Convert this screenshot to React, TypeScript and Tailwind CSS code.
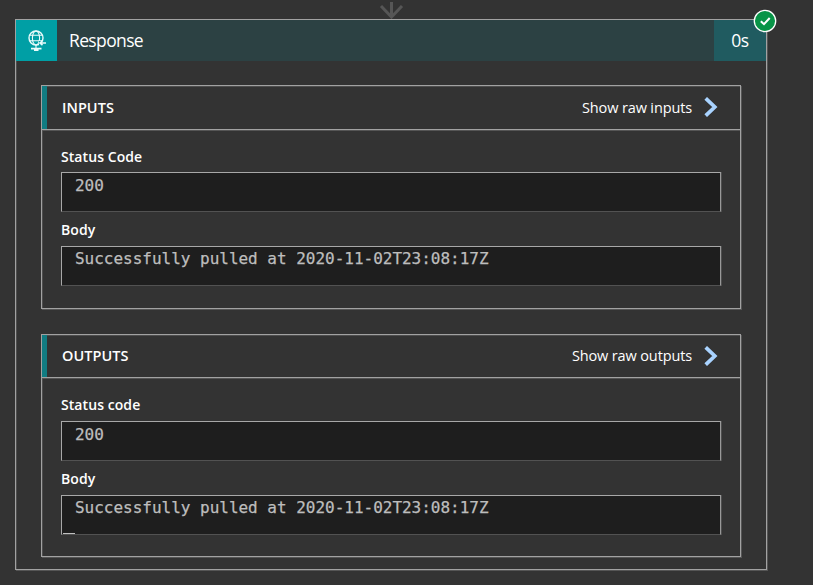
import React from 'react';

const lines = 'border border-[#a2a2a2] shadow-[inset_1px_1px_0_#4e4e4e,1px_1px_0_#555555]';

function GlobeIcon() {
  return (
    <svg width="20" height="22" viewBox="0 0 20 22" fill="none" stroke="#e9fbfb">
      <circle cx="9" cy="8" r="7" strokeWidth="1.4" />
      <ellipse cx="9" cy="8" rx="3.6" ry="7" strokeWidth="1.1" />
      <path d="M2.5 5.3h13M2.5 10.7h13M9 15v3" strokeWidth="1.1" />
      <path d="M4 18.6h10.5M7 20h4.5" strokeWidth="1.9" />
      <path d="M12 13h7" stroke="#009fa5" strokeWidth="4" />
      <path d="M19 13h-5.5M15.5 10.8l-2.5 2.2 2.5 2.2" strokeWidth="1.6" />
    </svg>
  );
}

interface FieldProps {
  label: string;
  value: string;
  gap: string;
  labelLeading: string;
  leading: string;
  cursor?: boolean;
}

function Field({ label, value, gap, labelLeading, leading, cursor = false }: FieldProps) {
  return (
    <div className={gap}>
      <div className={`h-5 text-[14px] font-semibold tracking-[0.07px] text-white ${labelLeading}`}>{label}</div>
      <div className={`relative mt-[6px] h-10 border border-[#a8a8a8] border-b-[#525252] border-r-[#999] bg-[#1e1e1e] pl-[13px] font-['DejaVu_Sans_Mono',monospace] text-[16px] tracking-[-0.015px] text-[#bdbdbd] shadow-[1px_0_0_#4e4e4e] [-webkit-text-stroke:0.25px_#bdbdbd] ${leading}`}>
        {value}
        {cursor && <span className="absolute bottom-0 left-[1px] h-px w-3 bg-[#c0c0c0]" />}
      </div>
    </div>
  );
}

interface PanelProps {
  title: string;
  action: string;
  statusLabel: string;
  panelClass: string;
  headerClass: string;
  firstGap: string;
  firstLeading: string;
  cursor?: boolean;
}

function Panel({ title, action, statusLabel, panelClass, headerClass, firstGap, firstLeading, cursor }: PanelProps) {
  return (
    <section className={`${lines} ${panelClass}`}>
      <header className={`flex items-center border-b border-[#a2a2a2] shadow-[0_1px_0_#555555] ${headerClass}`}>
        <span className="h-full w-[5px] bg-[#117c82]" />
        <h2 className="ml-[15px] text-[14.5px] font-semibold tracking-[0.05px] text-white">{title}</h2>
        <span className="ml-auto text-[14.5px] tracking-[-0.13px] text-white">{action}</span>
        <svg className="-mt-px ml-[12px] mr-[22px]" width="14" height="20" viewBox="0 0 14 20" fill="none">
          <path d="M1.7 1.3L10.8 10L1.7 18.7" stroke="#a9d3ff" strokeWidth="3.7" />
        </svg>
      </header>
      <div className="px-[19px]">
        <Field label={statusLabel} value="200" gap={firstGap} labelLeading={firstLeading} leading="leading-[25px]" />
        <Field label="Body" value="Successfully pulled at 2020-11-02T23:08:17Z" gap="pt-[8px]" labelLeading="leading-5" leading="leading-[23px]" cursor={cursor} />
      </div>
    </section>
  );
}

export default function App() {
  return (
    <main className="h-[585px] w-[813px] overflow-hidden bg-[#333333] pl-[15px] font-['Open_Sans','Noto_Sans',sans-serif]">
      <div className="flex h-[19px] w-[753px] justify-center">
        <svg width="26" height="19" viewBox="0 0 26 19" fill="none" stroke="#565656" strokeWidth="3">
          <path d="M12.5 2v15M2 6l10.5 11L23 6" />
        </svg>
      </div>
      <article className={`relative h-[551px] w-[752px] ${lines}`}>
        <header className="flex h-[41px] items-center bg-[#2c4143] text-[17.5px] text-white">
          <div className="flex h-full w-[41px] items-center justify-center bg-[#009fa5] pl-px">
            <GlobeIcon />
          </div>
          <h1 className="ml-3 pb-px tracking-[-0.63px]">Response</h1>
          <div className="ml-auto flex h-full w-[52px] items-center justify-center bg-[#205b60] pb-px tracking-[-0.4px]">0s</div>
        </header>
        <svg className="absolute right-[-11px] top-[-11px]" width="24" height="24" viewBox="0 0 24 24" fill="none">
          <circle cx="12" cy="12" r="10.7" fill="#079447" stroke="white" strokeWidth="1.3" />
          <path d="M7.8 12.2l3.2 3L16.7 9" stroke="white" strokeWidth="2" />
        </svg>
        <div className="pl-[25px] pt-[24px]">
          <Panel title="INPUTS" action="Show raw inputs" statusLabel="Status Code" panelClass="h-[224px] w-[700px]" headerClass="h-[44px]" firstGap="pt-[16px]" firstLeading="leading-[21px]" />
          <Panel title="OUTPUTS" action="Show raw outputs" statusLabel="Status code" panelClass="mt-[25px] h-[223px] w-[700px]" headerClass="h-[43px]" firstGap="pt-[17px]" firstLeading="leading-5" cursor />
        </div>
      </article>
    </main>
  );
}
